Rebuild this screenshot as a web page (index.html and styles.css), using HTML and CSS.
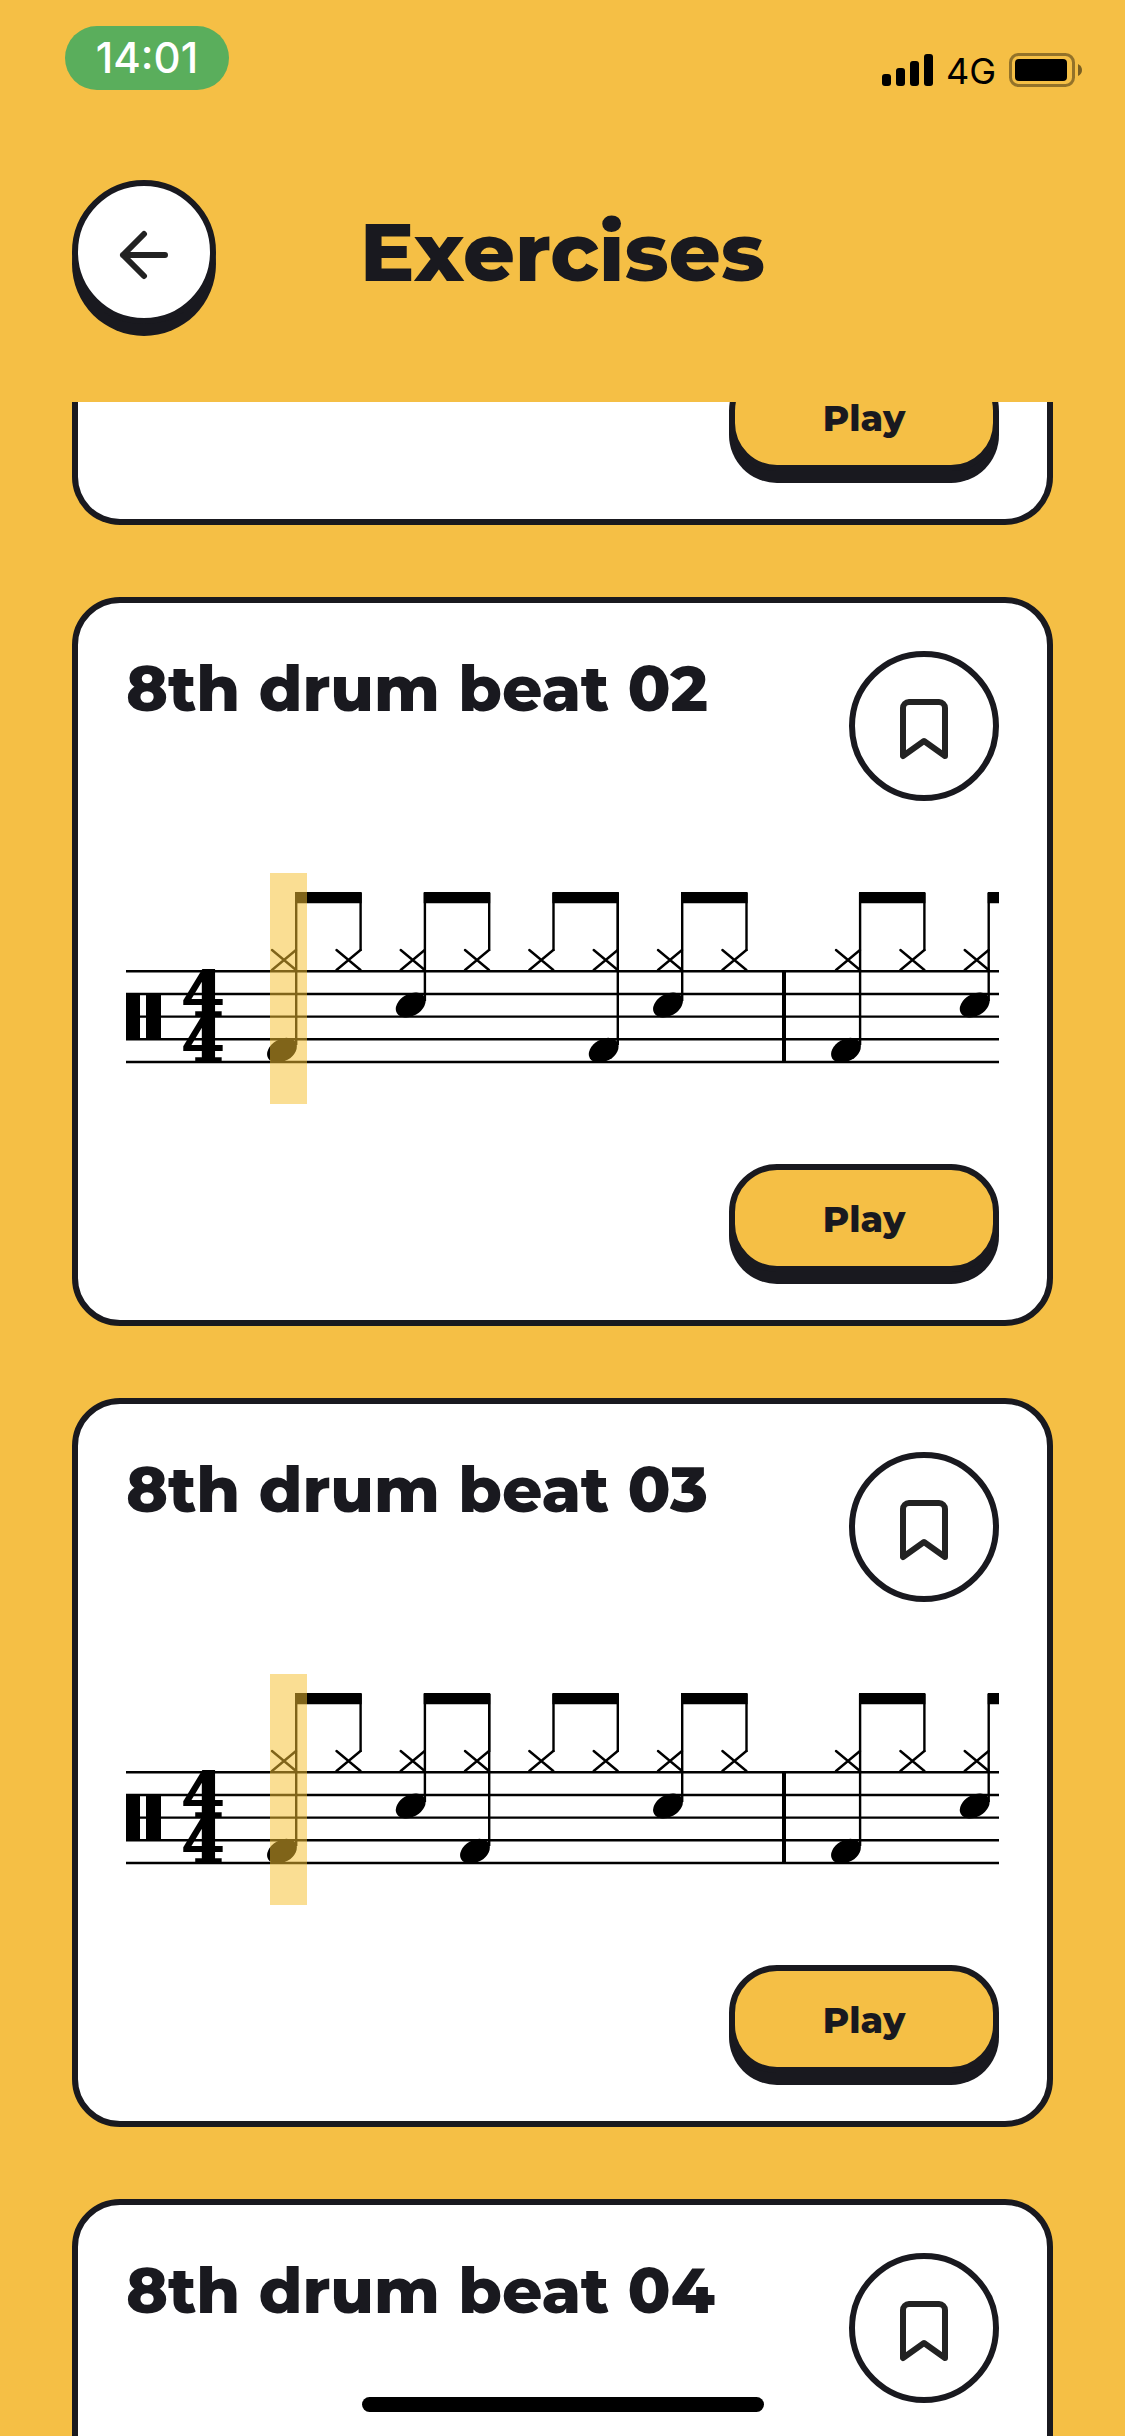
FILE: index.html
```html
<!DOCTYPE html>
<html lang="en">
<head>
<meta charset="utf-8">
<meta name="viewport" content="width=device-width, initial-scale=1">
<title>Exercises</title>
<link rel="stylesheet" href="styles.css">
</head>
<body>
<!-- Shared symbols: icons and notation parts -->
<svg class="defs" aria-hidden="true">
  <defs>
    <symbol id="bookmark" viewBox="0 0 24 24">
      <path d="M19 21l-7-5-7 5V5a2 2 0 0 1 2-2h10a2 2 0 0 1 2 2z"/>
    </symbol>
    <path id="hat" d="M-12 -10L12 10M-12 10L12 -10"/>
    <ellipse id="head" cx="-2" rx="16" ry="11" transform="rotate(-30 -2 0)"/>
    <!-- staff lines, clef, bar line, hi-hats and beams common to each beat -->
    <g id="staff">
      <path class="line" d="M0 98.3H2000M0 121H2000M0 143.6H2000M0 166.3H2000M0 189H2000"/>
      <path d="M0 121H14V166H0zM20 121H35V166H20z"/>
      <path d="M656 97H660V190H656z"/>
      <g class="hats">
        <use href="#hat" x="158" y="87"/><use href="#hat" x="222.5" y="87"/>
        <use href="#hat" x="286.7" y="87"/><use href="#hat" x="351" y="87"/>
        <use href="#hat" x="415.3" y="87"/><use href="#hat" x="479.7" y="87"/>
        <use href="#hat" x="544" y="87"/><use href="#hat" x="608.4" y="87"/>
        <use href="#hat" x="722" y="87"/><use href="#hat" x="786.4" y="87"/>
        <use href="#hat" x="850.7" y="87"/><use href="#hat" x="915" y="87"/>
      </g>
      <path d="M169 19H235.7V30.2H169zM297.7 19H364.2V30.2H297.7zM426.4 19H492.9V30.2H426.4zM555 19H621.6V30.2H555zM733 19H799.4V30.2H733zM861.7 19H928V30.2H861.7z"/>
      <path class="stem" d="M170.2 20V172M234.6 20V78M298.9 20V128M363.2 20V78M427.5 20V78M491.8 20V78M556.2 20V128M620.5 20V78M734.1 20V172M798.4 20V78M862.7 20V128"/>
      <use href="#head" x="158" y="177.3"/>
      <use href="#head" x="286.7" y="132"/>
      <use href="#head" x="544" y="132"/>
      <use href="#head" x="722" y="177.3"/>
      <use href="#head" x="850.7" y="132"/>
    </g>
  </defs>
</svg>

<header class="top">
  <div class="status">
    <span class="clock">14:01</span>
    <div class="signal">
      <svg class="bars" viewBox="0 0 51 32" aria-hidden="true">
        <rect y="20" width="9" height="12" rx="3"/><rect x="14" y="14" width="9" height="18" rx="3"/>
        <rect x="28" y="7" width="9" height="25" rx="3"/><rect x="42" width="9" height="32" rx="3"/>
      </svg>
      <span class="network">4G</span>
      <svg class="battery" viewBox="0 0 73 34" aria-hidden="true">
        <rect class="shell" x="1.5" y="1.5" width="63" height="31" rx="8"/>
        <rect x="6" y="6" width="52" height="22" rx="4"/>
        <path class="nub" d="M69 11q4 2 4 6t-4 6z"/>
      </svg>
    </div>
  </div>
  <nav class="bar">
    <button class="back" type="button" aria-label="Back">
      <svg class="icon" viewBox="0 0 24 24" aria-hidden="true"><path d="M19 12H5M12 19l-7-7 7-7"/></svg>
    </button>
    <h1 class="title">Exercises</h1>
  </nav>
</header>

<main class="list">
  <article class="card card-cut">
    <button class="play" type="button">Play</button>
  </article>

  <article class="card">
    <div class="head">
      <h2 class="name">8th drum beat 02</h2>
      <button class="save" type="button" aria-label="Bookmark"><svg class="icon" aria-hidden="true"><use href="#bookmark"/></svg></button>
    </div>
    <svg class="score" viewBox="0 0 873 231" preserveAspectRatio="xMinYMid slice" role="img" aria-label="Drum notation">
      <use href="#staff"/>
      <text class="meter" x="77" y="143">4</text><text class="meter" x="77" y="189">4</text>
      <path class="stem" d="M491.8 20V172"/>
      <use href="#head" x="479.7" y="177.3"/>
      <rect class="cursor" x="144" width="37" height="231"/>
    </svg>
    <button class="play" type="button">Play</button>
  </article>

  <article class="card">
    <div class="head">
      <h2 class="name">8th drum beat 03</h2>
      <button class="save" type="button" aria-label="Bookmark"><svg class="icon" aria-hidden="true"><use href="#bookmark"/></svg></button>
    </div>
    <svg class="score" viewBox="0 0 873 231" preserveAspectRatio="xMinYMid slice" role="img" aria-label="Drum notation">
      <use href="#staff"/>
      <text class="meter" x="77" y="143">4</text><text class="meter" x="77" y="189">4</text>
      <path class="stem" d="M363.2 20V172"/>
      <use href="#head" x="351" y="177.3"/>
      <rect class="cursor" x="144" width="37" height="231"/>
    </svg>
    <button class="play" type="button">Play</button>
  </article>

  <article class="card">
    <div class="head">
      <h2 class="name">8th drum beat 04</h2>
      <button class="save" type="button" aria-label="Bookmark"><svg class="icon" aria-hidden="true"><use href="#bookmark"/></svg></button>
    </div>
  </article>
</main>
<div class="home"></div>
</body>
</html>
```
FILE: styles.css
```css
:root {
  --sun: #f5bf45;
  --ink: #19191f;
}

* {
  box-sizing: border-box;
}

body {
  margin: 0;
  height: 100vh;
  display: flex;
  flex-direction: column;
  overflow: hidden;
  background: var(--sun);
  color: var(--ink);
  font-family: Montserrat, Inter, sans-serif;
}

h1,
h2 {
  margin: 0;
  font-weight: 800;
}

button {
  padding: 0;
  border: 6px solid var(--ink);
  color: var(--ink);
  font: inherit;
}

.defs {
  position: absolute;
  width: 0;
  height: 0;
}

/* Header */
.top {
  flex: none;
  padding-bottom: 78px;
}

.status {
  display: flex;
  justify-content: space-between;
  align-items: flex-start;
  height: 180px;
  padding: 26px 43px 0 65px;
  font-family: Inter, sans-serif;
}

.clock {
  width: 164px;
  border-radius: 32px;
  background: #5aae5c;
  color: #fff;
  font-size: 42px;
  font-weight: 500;
  line-height: 64px;
  text-align: center;
}

.signal {
  display: flex;
  align-items: center;
  gap: 13px;
  padding-top: 26px;
  color: #000;
  font-size: 36px;
  line-height: 34px;
}

.network {
  padding-top: 2px;
}

.bars {
  width: 51px;
  height: 32px;
}

.battery {
  width: 73px;
  height: 34px;
}

.shell {
  fill: none;
  stroke: #000;
  stroke-width: 3;
  opacity: 0.4;
}

.nub {
  opacity: 0.5;
}

.bar {
  display: grid;
  grid-template-columns: 144px 1fr 144px;
  align-items: center;
  padding: 0 72px;
}

.title {
  font-size: 81px;
  line-height: 98px;
  text-align: center;
}

.back,
.save {
  display: flex;
  align-items: center;
  justify-content: center;
  flex: none;
  padding-top: 6px;
  border-radius: 50%;
  background: #fff;
}

.back {
  width: 144px;
  height: 144px;
  box-shadow: 0 12px 0 var(--ink);
}

.save {
  width: 150px;
  height: 150px;
}

.icon {
  width: 72px;
  height: 72px;
  fill: none;
  stroke: #222;
  stroke-width: 2;
  stroke-linecap: round;
  stroke-linejoin: round;
}

/* Exercise cards */
.list {
  flex: 1;
  min-height: 0;
  display: flex;
  flex-direction: column;
  gap: 72px;
  padding: 0 72px;
  overflow: hidden;
}

.card {
  flex: none;
  display: flex;
  flex-direction: column;
  min-height: 729px;
  padding: 48px;
  border: 6px solid var(--ink);
  border-radius: 48px;
  background: #fff;
}

/* Card scrolled partly under the header */
.card-cut {
  justify-content: flex-end;
  height: 123px;
  min-height: 0;
  padding-top: 0;
  border-top: 0;
  border-radius: 0 0 48px 48px;
  overflow: hidden;
}

.head {
  display: flex;
  justify-content: space-between;
  align-items: flex-start;
}

.name {
  font-size: 63px;
  line-height: 76px;
}

.score {
  display: block;
  width: 100%;
  height: 231px;
  margin: 72px 0 60px;
}

.line {
  stroke: #000;
  stroke-width: 2.4;
}

.stem,
.hats {
  fill: none;
  stroke: #000;
  stroke-width: 2.4;
}

.hats {
  stroke-linecap: round;
}

.meter {
  font: bold 61px "DejaVu Serif", serif;
  text-anchor: middle;
  stroke: #000;
  stroke-width: 2;
}

.cursor {
  fill: #f5c030;
  opacity: 0.52;
}

.play {
  align-self: flex-end;
  flex: none;
  width: 270px;
  height: 108px;
  padding-top: 2px;
  border-radius: 48px;
  background: var(--sun);
  box-shadow: 0 12px 0 var(--ink);
  font-size: 36px;
  font-weight: 800;
}

.home {
  position: fixed;
  bottom: 24px;
  left: 50%;
  width: 402px;
  height: 15px;
  margin-left: -201px;
  border-radius: 8px;
  background: #000;
}
```
